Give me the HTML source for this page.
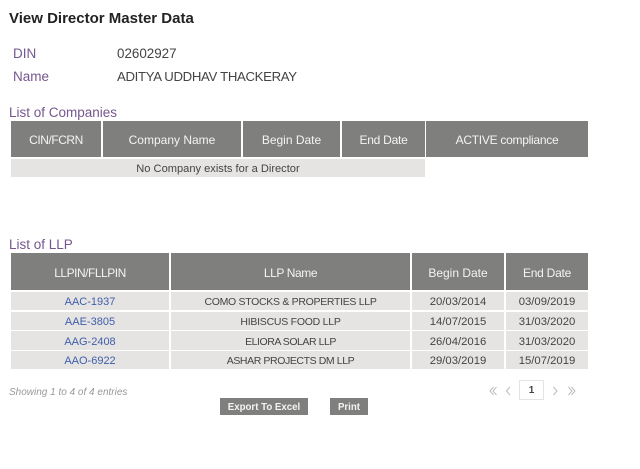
<!DOCTYPE html>
<html><head><meta charset="utf-8">
<style>
html,body{margin:0;padding:0;background:#fff;width:640px;height:469px;overflow:hidden}
body{font-family:"Liberation Sans",sans-serif;position:relative;filter:blur(0.35px)}
div{position:absolute;box-sizing:border-box;white-space:nowrap}
svg{position:absolute}
.h{background:#7f7f7d;color:#f4f4f4;font-size:12px;display:flex;align-items:center;justify-content:center;padding-top:2px}
.r{background:#e5e4e3;color:#444;font-size:10.5px;display:flex;align-items:center;justify-content:center;padding-top:1px}
.d{font-size:11.3px}
.a{color:#3f5eaa;font-size:11px}
.p{color:#75578f}
.b{background:#7f7f7d;color:#f4f4f4;font-size:9.7px;font-weight:bold;display:flex;align-items:center;justify-content:center;top:398px;height:17px;padding-top:1px}
</style></head><body>
<div style="left:9px;top:10px;font-size:15px;font-weight:bold;color:#222">View Director Master Data</div>
<div class="p" style="left:13px;top:45.5px;font-size:13.5px">DIN</div>
<div style="left:117px;top:45.5px;font-size:13.4px;color:#444">02602927</div>
<div class="p" style="left:13px;top:68.5px;font-size:13.5px">Name</div>
<div style="left:117px;top:68.5px;font-size:13.2px;letter-spacing:-0.33px;color:#444">ADITYA UDDHAV THACKERAY</div>
<div class="p" style="left:9px;top:104.5px;font-size:13.5px">List of Companies</div>

<div class="h" style="left:11px;top:121px;width:90px;height:36px;letter-spacing:-0.45px">CIN/FCRN</div>
<div class="h" style="left:103px;top:121px;width:138px;height:36px">Company Name</div>
<div class="h" style="left:243px;top:121px;width:97px;height:36px">Begin Date</div>
<div class="h" style="left:342px;top:121px;width:83px;height:36px;letter-spacing:-0.25px">End Date</div>
<div class="h" style="left:426px;top:121px;width:162px;height:36px;letter-spacing:-0.27px">ACTIVE compliance</div>
<div class="r" style="left:11px;top:159px;width:414px;height:18px;font-size:11.1px">No Company exists for a Director</div>

<div class="p" style="left:9px;top:236.5px;font-size:13.5px">List of LLP</div>
<div class="h" style="left:11px;top:253px;width:158px;height:37px;letter-spacing:-0.48px">LLPIN/FLLPIN</div>
<div class="h" style="left:171px;top:253px;width:239px;height:37px;letter-spacing:-0.4px">LLP Name</div>
<div class="h" style="left:412px;top:253px;width:92px;height:37px">Begin Date</div>
<div class="h" style="left:506px;top:253px;width:82px;height:37px;letter-spacing:-0.25px">End Date</div>

<div class="r a" style="left:11px;top:292px;width:158px;height:18px">AAC-1937</div>
<div class="r" style="left:171px;top:292px;width:239px;height:18px;letter-spacing:-0.3px">COMO STOCKS &amp; PROPERTIES LLP</div>
<div class="r d" style="left:412px;top:292px;width:92px;height:18px">20/03/2014</div>
<div class="r d" style="left:506px;top:292px;width:82px;height:18px">03/09/2019</div>

<div class="r a" style="left:11px;top:312px;width:158px;height:18px">AAE-3805</div>
<div class="r" style="left:171px;top:312px;width:239px;height:18px;letter-spacing:-0.25px">HIBISCUS FOOD LLP</div>
<div class="r d" style="left:412px;top:312px;width:92px;height:18px">14/07/2015</div>
<div class="r d" style="left:506px;top:312px;width:82px;height:18px">31/03/2020</div>

<div class="r a" style="left:11px;top:331px;width:158px;height:19px;padding-top:2px">AAG-2408</div>
<div class="r" style="left:171px;top:331px;width:239px;height:19px;padding-top:2px;letter-spacing:-0.45px">ELIORA SOLAR LLP</div>
<div class="r d" style="left:412px;top:331px;width:92px;height:19px;padding-top:2px">26/04/2016</div>
<div class="r d" style="left:506px;top:331px;width:82px;height:19px;padding-top:2px">31/03/2020</div>

<div class="r a" style="left:11px;top:351px;width:158px;height:18px">AAO-6922</div>
<div class="r" style="left:171px;top:351px;width:239px;height:18px;letter-spacing:-0.4px">ASHAR PROJECTS DM LLP</div>
<div class="r d" style="left:412px;top:351px;width:92px;height:18px">29/03/2019</div>
<div class="r d" style="left:506px;top:351px;width:82px;height:18px">15/07/2019</div>

<div style="left:9px;top:386.5px;font-size:10px;font-style:italic;color:#999">Showing 1 to 4 of 4 entries</div>

<svg style="left:488px;top:384px" width="90" height="14" viewBox="0 0 90 14" fill="none" stroke="#bcbcbc" stroke-width="1">
<path d="M5.5 3 L2 7 L5.5 11 M8.5 3 L5 7 L8.5 11"/>
<path d="M22 3 L18.5 7 L22 11"/>
<path d="M65.5 3 L69 7 L65.5 11"/>
<path d="M80.5 3 L84 7 L80.5 11 M83.5 3 L87 7 L83.5 11"/>
</svg>
<div style="left:519px;top:380px;width:25px;height:20px;border:1px solid #e4e4e4;font-size:10px;font-weight:bold;color:#444;display:flex;align-items:center;justify-content:center">1</div>

<div class="b" style="left:220px;width:88px">Export To Excel</div>
<div class="b" style="left:330px;width:38px">Print</div>
</body></html>
